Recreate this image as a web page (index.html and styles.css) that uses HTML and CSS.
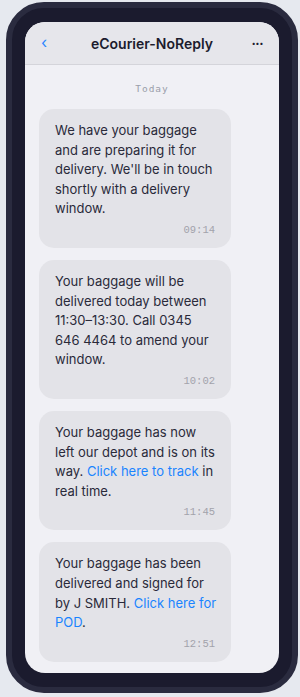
FILE: index.html
```html
<!DOCTYPE html>
<html lang="en">

<head>
  <meta charset="UTF-8">
  <meta name="viewport" content="width=device-width, initial-scale=1.0">
  <title>eCourier-NoReply</title>
  <link rel="stylesheet" href="styles.css">
</head>

<body>
  <div class="phone">
    <div class="screen">
      <div class="header">
        <span class="back">&#8249;</span>
        <span class="title">eCourier-NoReply</span>
        <span class="more">&middot;&middot;&middot;</span>
      </div>
      <div class="chat">
        <p class="day">Today</p>
        <div class="bubble">
          <p class="text">We have your baggage and are preparing it for delivery. We'll be in touch shortly with a delivery window.</p>
          <p class="time">09:14</p>
        </div>
        <div class="bubble">
          <p class="text">Your baggage will be delivered today between 11:30&ndash;13:30. Call 0345 646 4464 to amend your window.</p>
          <p class="time">10:02</p>
        </div>
        <div class="bubble">
          <p class="text">Your baggage has now left our depot and is on its way. <a href="#">Click here to track</a> in real time.</p>
          <p class="time">11:45</p>
        </div>
        <div class="bubble">
          <p class="text">Your baggage has been delivered and signed for by J SMITH. <a href="#">Click here for POD</a>.</p>
          <p class="time">12:51</p>
        </div>
      </div>
    </div>
  </div>
</body>

</html>
```

FILE: styles.css
```css
body {
  margin: 0;
  background: #e6e9ef;
  font-family: Inter, "Noto Sans", sans-serif;
}

.phone {
  width: 254px;
  height: 653px;
  margin: 2px 0 0 6px;
  padding: 13px;
  border: 6px solid #2a2b3f;
  border-radius: 38px;
  background: #1b1b2e;
}

.screen {
  height: 651px;
  margin-top: 1px;
  border-radius: 20px;
  background: #f0f0f5;
  overflow: hidden;
  display: flex;
  flex-direction: column;
}

.header {
  height: 42px;
  flex-shrink: 0;
  display: flex;
  align-items: center;
  justify-content: space-between;
  padding: 0 16px;
  background: #e6e6eb;
  border-bottom: 1px solid #d4d4da;
}

.header .back {
  width: 20px;
  color: #2f86ff;
  font-size: 16px;
  line-height: 1;
  margin-top: -2px;
}

.header .title {
  color: #1c1c2e;
  font-size: 14px;
  font-weight: 600;
}

.header .more {
  width: 20px;
  text-align: right;
  color: #1c1c2e;
  font-size: 13px;
  font-weight: bold;
  letter-spacing: -0.5px;
}

.chat {
  flex: 1;
  display: flex;
  flex-direction: column;
  align-items: flex-start;
  gap: 12px;
  padding: 17px 14px 12px;
}

.chat p {
  margin: 0;
}

.chat .day {
  align-self: center;
  color: #9a9eaa;
  font-family: "DejaVu Sans Mono", monospace;
  font-size: 9.5px;
  line-height: 14px;
  letter-spacing: 1px;
  margin-bottom: 1px;
}

.bubble {
  width: 164px;
  padding: 12px 12px 11px 16px;
  border-radius: 15px;
  background: #e3e3e8;
}

.bubble .text {
  color: #2a2a3a;
  font-size: 13px;
  line-height: 19.6px;
}

.bubble a {
  color: #1a84ff;
  text-decoration: none;
}

.bubble .time {
  margin: 4px 4px 0 0;
  text-align: right;
  color: #a2a2ab;
  font-family: "Liberation Mono", monospace;
  font-size: 10.5px;
  line-height: 14px;
}
```
